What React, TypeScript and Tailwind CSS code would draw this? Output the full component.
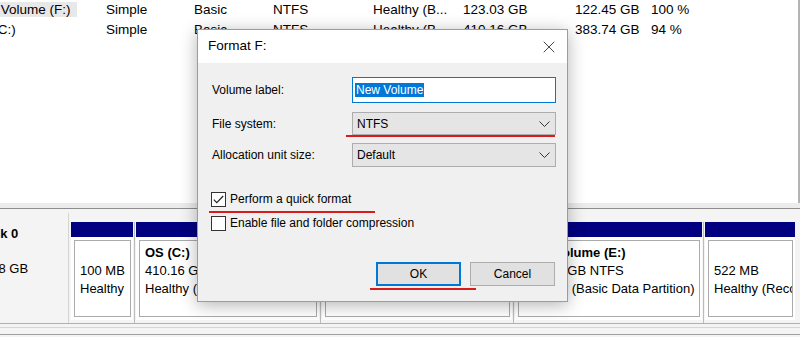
import { X } from 'lucide-react';

const rows = [
  { name: 'New Volume (F:)', layout: 'Simple', type: 'Basic', fs: 'NTFS', status: 'Healthy (B...', cap: '123.03 GB', free: '122.45 GB', pct: '100 %', selected: true },
  { name: 'OS (C:)', layout: 'Simple', type: 'Basic', fs: 'NTFS', status: 'Healthy (B...', cap: '410.16 GB', free: '383.74 GB', pct: '94 %', selected: false },
];

const parts = [
  { w: 'w-[62px]', title: '', lines: ['100 MB', 'Healthy'] },
  { w: 'w-[183px]', title: 'OS  (C:)', lines: ['410.16 GB NTFS', 'Healthy (Boot, Page File, Crash Dump, Basic Data Partition)'] },
  { w: 'w-[190px]', title: 'DATA  (D:)', lines: ['64.00 GB NTFS', 'Healthy (Basic Data Partition)'] },
  { w: 'w-[187px]', title: 'New Volume  (E:)', lines: ['298.10 GB NTFS', 'Healthy (Basic Data Partition)'] },
  { w: 'w-[90px]', title: '', lines: ['522 MB', 'Healthy (Recovery Partition)'] },
];

export default function App() {
  return (
    <div className="relative h-[337px] w-[800px] overflow-hidden bg-white font-['Liberation_Sans',Arial,sans-serif] text-black">
      <div className="h-[203px] overflow-hidden border-r-2 border-[#b4b4b4] bg-white text-[13.5px]">
        {rows.map((r) => (
          <div key={r.name} className="ml-[-30px] grid h-[20px] grid-cols-[136px_88px_79px_100px_90px_112px_76px_1fr] items-center whitespace-nowrap leading-[20px]">
            <div><span className={r.selected ? 'bg-[#e8e8e8] pr-[6px]' : ''}>{r.name}</span></div>
            <div>{r.layout}</div>
            <div>{r.type}</div>
            <div>{r.fs}</div>
            <div>{r.status}</div>
            <div>{r.cap}</div>
            <div>{r.free}</div>
            <div>{r.pct}</div>
          </div>
        ))}
      </div>
      <div className="h-[5px] bg-[#ececec]" />
      <div className="h-px bg-[#8c8c8c]" />

      <div className="h-[128px] bg-[#f4f4f4] pt-[4px] text-[13px]">
        <div className="flex h-[110px]">
          <div className="w-[69px] overflow-hidden whitespace-nowrap border-r border-[#d4d4d4] pt-[12px] leading-[17px]">
            <div className="ml-[-20px] font-bold">Disk 0</div>
            <div className="ml-[-34px] mt-[18px]">476.38 GB</div>
          </div>
          <div className="ml-[2px] flex pt-[9px]">
            {parts.map((p, i) => (
              <div key={i} className="flex">
                {i > 0 && (
                  <div className="flex w-[3px] justify-center">
                    <div className="w-px bg-[#bcbcbc]" />
                  </div>
                )}
                <div className={`${p.w} flex flex-col`}>
                  <div className="h-[15px] bg-[#000080]" />
                  <div className="h-[83px] bg-white pb-[3px] pl-[3px] pr-[2px] pt-[3px]">
                    <div className={`h-full overflow-hidden whitespace-nowrap border border-[#ababab] bg-white pl-[5px] leading-[18px] ${p.title ? 'pt-[3px]' : 'pt-[21px]'}`}>
                      {p.title && <div className="font-bold">{p.title}</div>}
                      {p.lines.map((l) => (
                        <div key={l}>{l}</div>
                      ))}
                    </div>
                  </div>
                </div>
              </div>
            ))}
          </div>
        </div>
        <div className="h-px bg-[#b0b0b0]" />
        <div className="h-[3px]" />
        <div className="h-px bg-[#d6d6d6]" />
        <div className="h-[6px]" />
        <div className="h-px bg-[#a0a0a0]" />
      </div>

      <FormatDialog />
    </div>
  );
}

function FormatDialog() {
  return (
    <div className="absolute left-[197px] top-[29px] h-[273px] w-[371px] border border-[#9c9c9c] bg-[#f0f0f0] text-[12px] shadow-[0_3px_16px_rgba(0,0,0,0.3)]">
      <div className="flex h-[33px] items-center justify-between bg-white pl-[10px] pr-[8px]">
        <span className="text-[13.5px]">Format F:</span>
        <X size={20} strokeWidth={1} className="text-[#222]" />
      </div>
      <div className="pt-[14px]">
        <div className="flex h-[26px] items-center">
          <div className="w-[154px] pl-[14px]">Volume label:</div>
          <div className="flex h-full w-[204px] items-center border border-[#0078d7] bg-white pl-[2px]">
            <span className="bg-[#0078d7] px-px leading-[14px] text-white">New Volume</span>
          </div>
        </div>
        <div className="mt-[9px] flex h-[23px] items-center">
          <div className="w-[154px] pl-[14px]">File system:</div>
          <SelectBox value="NTFS" />
        </div>
        <div className="mt-[8px] flex h-[24px] items-center">
          <div className="w-[154px] pl-[14px]">Allocation unit size:</div>
          <SelectBox value="Default" />
        </div>
        <div className="mt-[25px] pl-[13px]">
          <CheckRow checked label="Perform a quick format" />
        </div>
        <div className="mt-[9px] pl-[13px]">
          <CheckRow checked={false} label="Enable file and folder compression" />
        </div>
        <div className="mt-[31px] flex justify-end gap-[9px] pr-[12px]">
          <button className="h-[24px] w-[85px] border-2 border-[#0078d7] bg-[#e1e1e1] leading-[20px]">OK</button>
          <button className="h-[24px] w-[85px] border border-[#adadad] bg-[#e1e1e1] leading-[22px]">Cancel</button>
        </div>
      </div>

      <div className="absolute left-[148px] top-[105px] h-[1.5px] w-[209px] bg-[#d81c1c]" />
      <div className="absolute left-[11px] top-[181px] h-[1.5px] w-[166px] bg-[#d81c1c]" />
      <div className="absolute left-[172px] top-[258px] h-[1.5px] w-[106px] bg-[#d81c1c]" />
    </div>
  );
}

function SelectBox({ value }: { value: string }) {
  return (
    <div className="flex h-full w-[204px] items-center justify-between border border-[#adadad] bg-[#e5e5e5] pl-[4px] pr-[5px]">
      <span>{value}</span>
      <svg width="11" height="6" viewBox="0 0 11 6" fill="none" stroke="#333" strokeWidth="1">
        <path d="M0.5 0.5 L5.5 5.5 L10.5 0.5" />
      </svg>
    </div>
  );
}

function CheckRow({ checked, label }: { checked: boolean; label: string }) {
  return (
    <div className="flex h-[15px] items-center gap-[4px] leading-[15px]">
      <div className="flex h-[15px] w-[15px] shrink-0 items-center justify-center border border-[#333] bg-white">
        {checked && (
          <svg width="11" height="9" viewBox="0 0 11 9" fill="none" stroke="#222" strokeWidth="1.2">
            <path d="M0.8 4.6 L3.8 7.6 L10.2 1" />
          </svg>
        )}
      </div>
      <span>{label}</span>
    </div>
  );
}
